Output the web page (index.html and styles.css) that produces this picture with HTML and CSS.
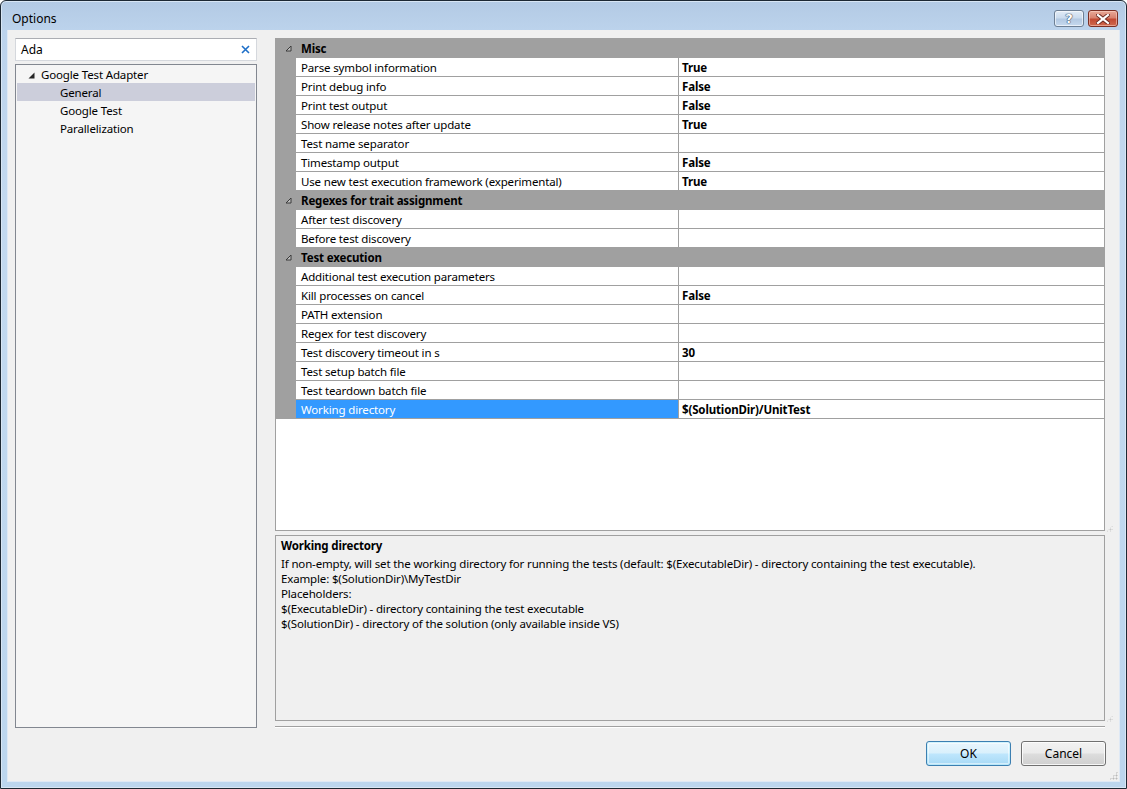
FILE: index.html
```html
<!DOCTYPE html>
<html>
<head>
<meta charset="utf-8">
<title>Options</title>
<link rel="stylesheet" href="styles.css">
</head>
<body>
<div class="window">
  <div class="titlebar">
    <span class="title">Options</span>
    <div class="caption-buttons">
      <div class="cbtn help"><span>?</span></div>
      <div class="cbtn close">
        <svg width="14" height="10" viewBox="0 0 14 10"><path d="M2 1 L12 9 M12 1 L2 9" stroke="#6b2a22" stroke-width="4" stroke-linecap="square"/><path d="M2 1 L12 9 M12 1 L2 9" stroke="#ffffff" stroke-width="2.2" stroke-linecap="square"/></svg>
      </div>
    </div>
  </div>
  <div class="frame">
    <div class="client">
      <div class="main">
        <div class="left">
          <div class="search">
            <span class="search-text">Ada</span>
            <svg class="search-x" width="9" height="9" viewBox="0 0 9 9"><path d="M1 1 L8 8 M8 1 L1 8" stroke="#1e6fc8" stroke-width="1.6"/></svg>
          </div>
          <div class="tree">
            <div class="tree-row root">
              <svg class="tree-arrow" width="7" height="7" viewBox="0 0 7 7"><polygon points="6.5,0.5 6.5,6.5 0.5,6.5" fill="#262626"/></svg>
              <span>Google Test Adapter</span>
            </div>
            <div class="tree-row child selected"><span>General</span></div>
            <div class="tree-row child"><span>Google Test</span></div>
            <div class="tree-row child"><span>Parallelization</span></div>
          </div>
        </div>
        <div class="right">
          <div class="grid">
            <div class="cat"><span class="cat-glyph"><svg width="7" height="7" viewBox="0 0 7 7"><polygon points="6,1 6,6 1,6" fill="#bdbdbd" stroke="#3a3a3a" stroke-width="1"/></svg></span><span class="cat-name">Misc</span></div>
            <div class="prow"><span class="margin"></span><span class="pname">Parse symbol information</span><span class="pval">True</span></div>
            <div class="prow"><span class="margin"></span><span class="pname">Print debug info</span><span class="pval">False</span></div>
            <div class="prow"><span class="margin"></span><span class="pname">Print test output</span><span class="pval">False</span></div>
            <div class="prow"><span class="margin"></span><span class="pname">Show release notes after update</span><span class="pval">True</span></div>
            <div class="prow"><span class="margin"></span><span class="pname">Test name separator</span><span class="pval"></span></div>
            <div class="prow"><span class="margin"></span><span class="pname">Timestamp output</span><span class="pval">False</span></div>
            <div class="prow"><span class="margin"></span><span class="pname">Use new test execution framework (experimental)</span><span class="pval">True</span></div>
            <div class="cat"><span class="cat-glyph"><svg width="7" height="7" viewBox="0 0 7 7"><polygon points="6,1 6,6 1,6" fill="#bdbdbd" stroke="#3a3a3a" stroke-width="1"/></svg></span><span class="cat-name">Regexes for trait assignment</span></div>
            <div class="prow"><span class="margin"></span><span class="pname">After test discovery</span><span class="pval"></span></div>
            <div class="prow"><span class="margin"></span><span class="pname">Before test discovery</span><span class="pval"></span></div>
            <div class="cat"><span class="cat-glyph"><svg width="7" height="7" viewBox="0 0 7 7"><polygon points="6,1 6,6 1,6" fill="#bdbdbd" stroke="#3a3a3a" stroke-width="1"/></svg></span><span class="cat-name">Test execution</span></div>
            <div class="prow"><span class="margin"></span><span class="pname">Additional test execution parameters</span><span class="pval"></span></div>
            <div class="prow"><span class="margin"></span><span class="pname">Kill processes on cancel</span><span class="pval">False</span></div>
            <div class="prow"><span class="margin"></span><span class="pname">PATH extension</span><span class="pval"></span></div>
            <div class="prow"><span class="margin"></span><span class="pname">Regex for test discovery</span><span class="pval"></span></div>
            <div class="prow"><span class="margin"></span><span class="pname">Test discovery timeout in s</span><span class="pval">30</span></div>
            <div class="prow"><span class="margin"></span><span class="pname">Test setup batch file</span><span class="pval"></span></div>
            <div class="prow"><span class="margin"></span><span class="pname">Test teardown batch file</span><span class="pval"></span></div>
            <div class="prow sel"><span class="margin"></span><span class="pname">Working directory</span><span class="pval">$(SolutionDir)/UnitTest</span></div>
            <span class="grip"></span>
          </div>
          <div class="desc">
            <div class="desc-title">Working directory</div>
            <div class="desc-line">If non-empty, will set the working directory for running the tests (default: $(ExecutableDir) - directory containing the test executable).</div>
            <div class="desc-line">Example: $(SolutionDir)\MyTestDir</div>
            <div class="desc-line">Placeholders:</div>
            <div class="desc-line">$(ExecutableDir) - directory containing the test executable</div>
            <div class="desc-line">$(SolutionDir) - directory of the solution (only available inside VS)</div>
            <span class="grip"></span>
          </div>
          <div class="separator"></div>
        </div>
      </div>
      <div class="buttons">
        <div class="btn default"><span>OK</span></div>
        <div class="btn"><span>Cancel</span></div>
      </div>
      <span class="sizegrip"></span>
    </div>
  </div>
</div>
</body>
</html>
```

FILE: styles.css
```css
html, body {
  margin: 0;
  padding: 0;
  width: 1127px;
  height: 789px;
  overflow: hidden;
  background: #ffffff;
}

body {
  font-family: "Noto Sans", "Open Sans", "Liberation Sans", sans-serif;
  font-size: 11.5px;
  letter-spacing: -0.15px;
  color: #000;
}

.window {
  box-sizing: border-box;
  width: 1127px;
  height: 789px;
  border: 1px solid #1d2833;
  border-radius: 6px 6px 0 0;
  background: linear-gradient(180deg, #b3cae4 0px, #bcd3ec 30px, #c3d9ef 200px, #bcd6ee 789px);
  display: flex;
  flex-direction: column;
  box-shadow: inset 0 0 0 1px #d8e6f4;
}

.titlebar {
  height: 29px;
  display: flex;
  align-items: flex-start;
  justify-content: space-between;
  padding-left: 11px;
  padding-right: 8px;
  box-sizing: border-box;
}

.title {
  font-size: 12px;
  line-height: 12px;
  margin-top: 12px;
  letter-spacing: 0;
  color: #000;
}

.caption-buttons {
  display: flex;
  gap: 4px;
  margin-top: 9px;
}

.cbtn {
  box-sizing: border-box;
  width: 30px;
  height: 17px;
  border: 1px solid #6d7f94;
  border-radius: 3px;
  display: flex;
  align-items: center;
  justify-content: center;
}

.cbtn.help {
  background: linear-gradient(180deg, #e2ecf6 0%, #cbdcee 45%, #b3c9e2 55%, #c6d9ee 100%);
  box-shadow: inset 0 0 0 1px rgba(255,255,255,0.6);
}

.cbtn.help span {
  font-family: "DejaVu Sans", sans-serif;
  font-size: 13px;
  font-weight: bold;
  color: #ffffff;
  line-height: 13px;
  letter-spacing: 0;
  text-shadow: 0 0 1px #30455e, 0 0 1px #30455e, 0 0 1px #30455e;
}

.cbtn.close {
  border-color: #7a2f24;
  background: linear-gradient(180deg, #e8a998 0%, #d8826f 45%, #c24a33 55%, #cf6a4f 100%);
  box-shadow: inset 0 0 0 1px rgba(255,220,210,0.5);
}

.frame {
  flex: 1;
  display: flex;
  padding: 0 6px 6px 6px;
  min-height: 0;
}

.client {
  flex: 1;
  position: relative;
  background: #f0f0f0;
  border: 1px solid #dfe9f5;
  border-top: none;
  display: flex;
  flex-direction: column;
  padding: 8px 0 0 7px;
}

.main {
  display: flex;
  gap: 18px;
  height: 690px;
}

.left {
  width: 242px;
  display: flex;
  flex-direction: column;
  gap: 3px;
}

.search {
  box-sizing: border-box;
  height: 23px;
  background: #ffffff;
  border: 1px solid #d5d8dd;
  border-top-color: #abadb3;
  display: flex;
  align-items: center;
  justify-content: space-between;
  padding: 0 6px 0 5px;
}

.search-text {
  font-size: 12px;
  letter-spacing: 0;
}

.tree {
  flex: 1;
  box-sizing: border-box;
  background: #f5f5f5;
  border: 1px solid #828790;
  padding: 1px 1px 0 1px;
}

.tree-row {
  height: 18px;
  display: flex;
  align-items: center;
}

.tree-row.root {
  height: 17px;
  padding-left: 11px;
}

.tree-arrow {
  margin-right: 6px;
  margin-top: 1px;
}

.tree-row.child {
  padding-left: 43px;
}

.tree-row.selected {
  background: #cccedb;
}

.right {
  width: 830px;
  display: flex;
  flex-direction: column;
}

.grid {
  position: relative;
  box-sizing: border-box;
  height: 493px;
  background: #ffffff;
  border: 1px solid #a0a0a0;
}

.cat {
  height: 19px;
  background: #a0a0a0;
  display: flex;
  align-items: center;
}

.cat-glyph {
  width: 20px;
  display: flex;
  justify-content: center;
  padding-left: 4px;
  box-sizing: border-box;
}

.cat-name {
  font-weight: bold;
  padding-left: 5px;
}

.prow {
  height: 19px;
  display: flex;
}

.margin {
  width: 20px;
  flex: none;
  background: #a0a0a0;
}

.pname {
  box-sizing: border-box;
  width: 382px;
  flex: none;
  padding-left: 5px;
  padding-top: 1px;
  border-bottom: 1px solid #a0a0a0;
  line-height: 17px;
  white-space: nowrap;
  overflow: hidden;
}

.pval {
  flex: 1;
  box-sizing: border-box;
  border-left: 1px solid #a0a0a0;
  border-bottom: 1px solid #a0a0a0;
  padding-left: 3px;
  padding-top: 1px;
  font-weight: bold;
  line-height: 17px;
  white-space: nowrap;
}

.prow.sel .pname {
  background: #3399ff;
  color: #ffffff;
}

.desc {
  position: relative;
  box-sizing: border-box;
  height: 186px;
  margin-top: 4px;
  background: #f0f0f0;
  border: 1px solid #a0a0a0;
  padding: 1px 5px;
}

.desc-title {
  font-weight: bold;
  line-height: 17px;
  margin-bottom: 2px;
}

.desc-line {
  line-height: 15px;
  white-space: nowrap;
}

.grip {
  position: absolute;
  right: -9px;
  bottom: -2px;
  width: 7px;
  height: 7px;
  background:
    radial-gradient(circle, #c9c9c9 0.8px, transparent 1.2px) 0 0 / 3px 3px;
  clip-path: polygon(100% 0, 100% 100%, 0 100%);
}

.separator {
  margin-top: 5px;
  height: 2px;
  box-sizing: border-box;
  border-top: 1px solid #a0a0a0;
  border-bottom: 1px solid #ffffff;
}

.buttons {
  display: flex;
  justify-content: flex-end;
  gap: 10px;
  margin-top: 13px;
  padding-right: 13px;
}

.btn {
  box-sizing: border-box;
  width: 85px;
  height: 25px;
  border: 1px solid #707070;
  border-radius: 3px;
  background: linear-gradient(180deg, #f2f2f2 0%, #ebebeb 48%, #dddddd 52%, #cfcfcf 100%);
  box-shadow: inset 0 0 0 1px rgba(255,255,255,0.8);
  display: flex;
  align-items: center;
  justify-content: center;
  font-size: 12px;
  letter-spacing: 0;
}

.btn.default {
  border-color: #3c7fb1;
  background: linear-gradient(180deg, #eaf6fd 0%, #d9f0fc 48%, #bee6fd 52%, #a7d9f5 100%);
  box-shadow: inset 0 0 0 1px #48d7fb33, inset 0 0 0 2px rgba(255,255,255,0.5);
}

.sizegrip {
  position: absolute;
  right: 1px;
  bottom: 1px;
  width: 9px;
  height: 9px;
  background:
    radial-gradient(circle, #b9b9b9 0.8px, transparent 1.2px) 0 0 / 3px 3px;
  clip-path: polygon(100% 0, 100% 100%, 0 100%);
}
```
